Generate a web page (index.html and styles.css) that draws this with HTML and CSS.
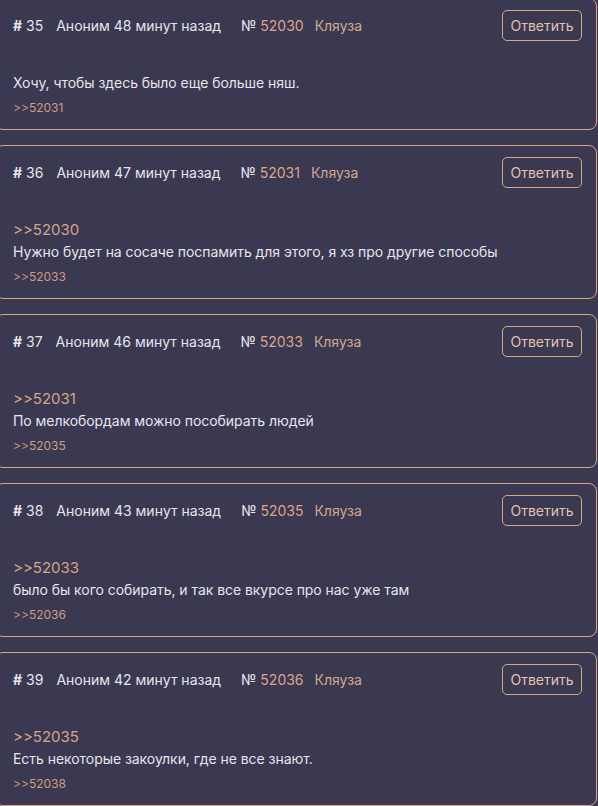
FILE: index.html
```html
<!DOCTYPE html>
<html lang="ru">
<head>
    <meta charset="UTF-8">
    <meta name="viewport" content="width=device-width, initial-scale=1.0">
    <title>Тред</title>
    <link rel="stylesheet" href="styles.css">
</head>
<body>
    <div class="thread">
        <div class="post">
            <div class="post-head">
                <span class="num"><b>#</b> 35</span>
                <span class="author">Аноним 48 минут назад</span>
                <span class="id">№ <span class="accent">52030</span></span>
                <a href="#" class="report">Кляуза</a>
                <button class="reply">Ответить</button>
            </div>
            <div class="post-body">
                <div class="text">Хочу, чтобы здесь было еще больше няш.</div>
                <a href="#" class="answer">&gt;&gt;52031</a>
            </div>
        </div>
        <div class="post">
            <div class="post-head">
                <span class="num"><b>#</b> 36</span>
                <span class="author">Аноним 47 минут назад</span>
                <span class="id">№ <span class="accent">52031</span></span>
                <a href="#" class="report">Кляуза</a>
                <button class="reply">Ответить</button>
            </div>
            <div class="post-body">
                <a href="#" class="quote">&gt;&gt;52030</a>
                <div class="text">Нужно будет на сосаче поспамить для этого, я хз про другие способы</div>
                <a href="#" class="answer">&gt;&gt;52033</a>
            </div>
        </div>
        <div class="post">
            <div class="post-head">
                <span class="num"><b>#</b> 37</span>
                <span class="author">Аноним 46 минут назад</span>
                <span class="id">№ <span class="accent">52033</span></span>
                <a href="#" class="report">Кляуза</a>
                <button class="reply">Ответить</button>
            </div>
            <div class="post-body">
                <a href="#" class="quote">&gt;&gt;52031</a>
                <div class="text">По мелкобордам можно пособирать людей</div>
                <a href="#" class="answer">&gt;&gt;52035</a>
            </div>
        </div>
        <div class="post">
            <div class="post-head">
                <span class="num"><b>#</b> 38</span>
                <span class="author">Аноним 43 минут назад</span>
                <span class="id">№ <span class="accent">52035</span></span>
                <a href="#" class="report">Кляуза</a>
                <button class="reply">Ответить</button>
            </div>
            <div class="post-body">
                <a href="#" class="quote">&gt;&gt;52033</a>
                <div class="text">было бы кого собирать, и так все вкурсе про нас уже там</div>
                <a href="#" class="answer">&gt;&gt;52036</a>
            </div>
        </div>
        <div class="post">
            <div class="post-head">
                <span class="num"><b>#</b> 39</span>
                <span class="author">Аноним 42 минут назад</span>
                <span class="id">№ <span class="accent">52036</span></span>
                <a href="#" class="report">Кляуза</a>
                <button class="reply">Ответить</button>
            </div>
            <div class="post-body">
                <a href="#" class="quote">&gt;&gt;52035</a>
                <div class="text">Есть некоторые закоулки, где не все знают.</div>
                <a href="#" class="answer">&gt;&gt;52038</a>
            </div>
        </div>
    </div>
</body>
</html>
```

FILE: styles.css
```css
body {
    margin: 0;
    background-color: #3b3852;
    font-family: Inter, "Noto Sans", sans-serif;
    color: #e6e4ec;
    overflow: hidden;
}
.thread {
    margin: -2px 1px 0 -5px;
}
.post {
    border: 1px solid #d9a67e;
    border-radius: 8px;
    padding: 11px 14px 13px 17px;
    margin-bottom: 15px;
}
.post-head {
    display: flex;
    align-items: center;
    height: 31px;
    font-size: 14px;
}
.num b {
    font-weight: 700;
}
.author {
    margin-left: 13px;
}
.id {
    margin-left: 20px;
}
.accent {
    color: #dba685;
}
.report {
    margin-left: 11px;
    color: #d2a88e;
    text-decoration: none;
}
.reply {
    margin-left: auto;
    width: 80px;
    height: 31px;
    background: transparent;
    border: 1px solid #d9a67e;
    border-radius: 5px;
    color: #e3c3ad;
    font-family: inherit;
    font-size: 14px;
    padding: 0;
}
.post-body {
    margin-top: 31px;
}
.quote {
    display: block;
    font-size: 15px;
    line-height: 22px;
    color: #d3a488;
    text-decoration: none;
}
.text {
    font-size: 14px;
    line-height: 21px;
    letter-spacing: -0.05px;
}
.answer {
    display: block;
    margin-top: 7px;
    font-size: 12px;
    line-height: 16px;
    color: #cc9d80;
    text-decoration: none;
}
```
